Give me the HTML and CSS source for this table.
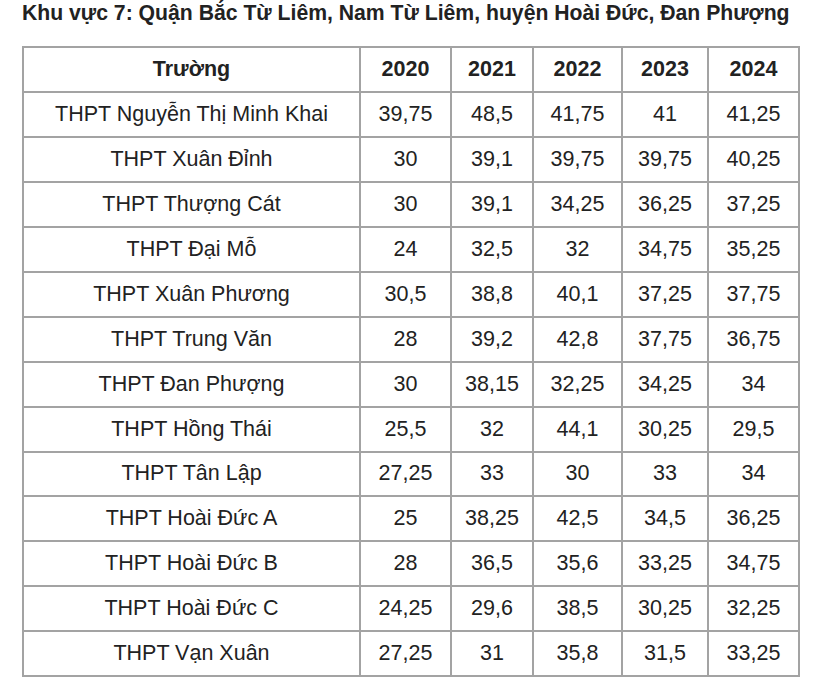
FILE: index.html
```html
<!DOCTYPE html>
<html lang="vi">
<head>
<meta charset="utf-8">
<title>Khu vực 7</title>
<link rel="stylesheet" href="styles.css">
</head>
<body>
<div class="page">
  <h2 class="title">Khu vực 7: Quận Bắc Từ Liêm, Nam Từ Liêm, huyện Hoài Đức, Đan Phượng</h2>
  <table class="scores">
    <colgroup>
      <col class="c-name"><col class="c-y1"><col class="c-y2"><col class="c-y3"><col class="c-y4"><col class="c-y5">
    </colgroup>
    <thead>
      <tr><th>Trường</th><th>2020</th><th>2021</th><th>2022</th><th>2023</th><th>2024</th></tr>
    </thead>
    <tbody>
      <tr><td>THPT Nguyễn Thị Minh Khai</td><td>39,75</td><td>48,5</td><td>41,75</td><td>41</td><td>41,25</td></tr>
      <tr><td>THPT Xuân Đỉnh</td><td>30</td><td>39,1</td><td>39,75</td><td>39,75</td><td>40,25</td></tr>
      <tr><td>THPT Thượng Cát</td><td>30</td><td>39,1</td><td>34,25</td><td>36,25</td><td>37,25</td></tr>
      <tr><td>THPT Đại Mỗ</td><td>24</td><td>32,5</td><td>32</td><td>34,75</td><td>35,25</td></tr>
      <tr><td>THPT Xuân Phương</td><td>30,5</td><td>38,8</td><td>40,1</td><td>37,25</td><td>37,75</td></tr>
      <tr><td>THPT Trung Văn</td><td>28</td><td>39,2</td><td>42,8</td><td>37,75</td><td>36,75</td></tr>
      <tr><td>THPT Đan Phượng</td><td>30</td><td>38,15</td><td>32,25</td><td>34,25</td><td>34</td></tr>
      <tr><td>THPT Hồng Thái</td><td>25,5</td><td>32</td><td>44,1</td><td>30,25</td><td>29,5</td></tr>
      <tr><td>THPT Tân Lập</td><td>27,25</td><td>33</td><td>30</td><td>33</td><td>34</td></tr>
      <tr><td>THPT Hoài Đức A</td><td>25</td><td>38,25</td><td>42,5</td><td>34,5</td><td>36,25</td></tr>
      <tr><td>THPT Hoài Đức B</td><td>28</td><td>36,5</td><td>35,6</td><td>33,25</td><td>34,75</td></tr>
      <tr><td>THPT Hoài Đức C</td><td>24,25</td><td>29,6</td><td>38,5</td><td>30,25</td><td>32,25</td></tr>
      <tr><td>THPT Vạn Xuân</td><td>27,25</td><td>31</td><td>35,8</td><td>31,5</td><td>33,25</td></tr>
    </tbody>
  </table>
</div>
</body>
</html>
```
FILE: styles.css
```css
html, body {
  margin: 0;
  padding: 0;
  background: #ffffff;
}
.page {
  padding: 1px 22px 0 22px;
  font-family: "Liberation Sans", Arial, sans-serif;
  color: #222222;
}
.title {
  margin: 0 0 21px 0;
  font-size: 21.2px;
  line-height: 24px;
  font-weight: bold;
  white-space: nowrap;
}
.scores {
  border-collapse: collapse;
  width: 776px;
  table-layout: fixed;
  font-size: 21.5px;
}
.c-name { width: 337px; }
.c-y1 { width: 91px; }
.c-y2 { width: 82px; }
.c-y3 { width: 89px; }
.c-y4 { width: 86px; }
.c-y5 { width: 91px; }
.scores th, .scores td {
  border: 2px solid #a3a3a3;
  text-align: center;
  padding: 0;
  box-sizing: border-box;
}
.scores th {
  font-weight: bold;
  height: 45px;
}
.scores td {
  font-weight: normal;
  height: 44.95px;
}
```
